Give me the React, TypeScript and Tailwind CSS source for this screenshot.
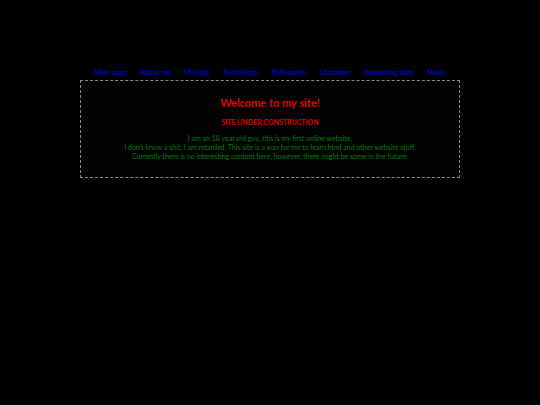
const NAV_ITEMS = [
  "Main page",
  "About me",
  "My blog",
  "Technology",
  "Philosophy",
  "Literature",
  "Interesting sites",
  "Music",
]

export default function App() {
  return (
    <div
      className="w-[540px] h-[405px] bg-black flex flex-col items-center pt-[67px]"
      style={{ fontFamily: "Lato, 'Open Sans', sans-serif" }}
    >
      {/* Nav */}
      <nav className="flex gap-[13px] h-[11px] items-center">
        {NAV_ITEMS.map(label => (
          <a key={label} href="#" className="text-[7.1px] font-bold text-[#0000c8] leading-none">
            {label}
          </a>
        ))}
      </nav>

      {/* Content box */}
      <div className="mt-[2px] w-[380px] h-[98px] border border-dashed border-[#8a8a8a] bg-[#020202] flex flex-col items-center pt-[16px]">
        <h1 className="text-[11px] font-bold text-[#e00000] leading-none">Welcome to my site!</h1>
        <h2 className="mt-[11px] text-[7px] font-bold text-[#e00000] leading-none uppercase">
          Site under construction
        </h2>
        <div className="mt-[8px] text-[7px] text-[#008000] text-center leading-[9px]">
          <p>I am an 18 year old guy, this is my first online website.</p>
          <p>I don't know a shit, I am retarded. This site is a way for me to learn html and other website stuff.</p>
          <p>Currently there is no interesting content here, however, there might be some in the future.</p>
        </div>
      </div>
    </div>
  )
}
